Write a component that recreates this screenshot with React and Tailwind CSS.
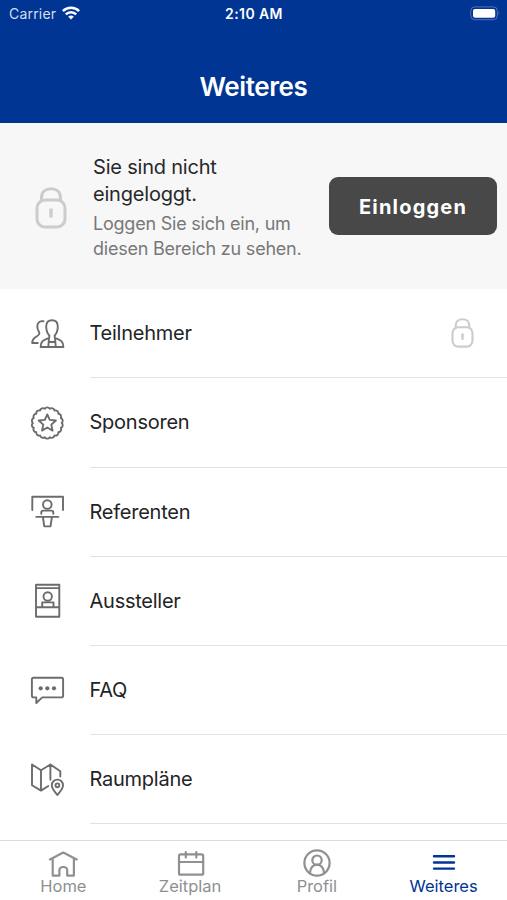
function LockIcon({ className }) {
  return (
    <svg
      viewBox="0 0 32 42"
      className={className}
      fill="none"
      stroke="#cccccc"
      strokeWidth="3"
      strokeLinecap="round"
    >
      <rect x="2" y="13" width="28" height="27" rx="8" />
      <path d="M6.5 13.5 V10.5 C6.5 5 10.5 1.7 16 1.7 C21.5 1.7 25.5 5 25.5 10.5 V13.5" />
      <path d="M16 21.5 V30.5" strokeLinecap="butt" strokeWidth="3.4" />
    </svg>
  );
}

function scallopPath(cx, cy, r, count) {
  let d = "";
  for (let i = 0; i <= count; i++) {
    const a = (i / count) * Math.PI * 2;
    const x = (cx + r * Math.cos(a)).toFixed(2);
    const y = (cy + r * Math.sin(a)).toFixed(2);
    d += i === 0 ? `M${x} ${y}` : ` A2.9 2.9 0 0 1 ${x} ${y}`;
  }
  return d + " Z";
}

function RowIcon({ children }) {
  return (
    <svg
      viewBox="0 0 40 40"
      className="ml-[27px] h-10 w-10 shrink-0"
      fill="none"
      stroke="#6b6c6e"
      strokeWidth="1.9"
      strokeLinecap="round"
      strokeLinejoin="round"
    >
      {children}
    </svg>
  );
}

const rows = [
  {
    label: "Teilnehmer",
    locked: true,
    icon: (
      <>
        <path d="M22.3 23.5 V21.5 C20 19 19.2 15.5 19.2 12.5 C19.2 8.5 21.5 6.2 25 6.2 C28.5 6.2 30.8 8.5 30.8 12.5 C30.8 15.5 30 19 27.7 21.5 V23.5 C31 26 36.4 25.5 36.4 33 H13.6 C13.6 25.5 19 26 22.3 23.5 Z" />
        <path d="M22 24.5 L21.3 33 M28 24.5 L28.8 33 M22 28 H28" />
        <path d="M16.5 7.3 C13.5 6.6 10.5 8.2 10.3 12 C10.2 14.5 11 16.5 12.2 18.5 C13.2 20.8 10.5 22 8 23.5 C5.8 25 5.2 26.5 5.2 29 H10.8" />
      </>
    ),
  },
  {
    label: "Sponsoren",
    icon: (
      <>
        <path d={scallopPath(20.3, 20, 14.4, 18)} />
        <path d="M20.3 11.4 L22.8 16.9 L28.9 17.5 L24.3 21.6 L25.6 27.6 L20.3 24.5 L15 27.6 L16.3 21.6 L11.7 17.5 L17.8 16.9 Z" />
      </>
    ),
  },
  {
    label: "Referenten",
    icon: (
      <>
        <path d="M5.3 18 V4.8 H36 V18" />
        <circle cx="20.3" cy="12.5" r="4.3" />
        <path d="M14.3 21.8 V20.5 Q14.3 18.6 16.3 18.6 H24.3 Q26.3 18.6 26.3 20.5 V21.8" />
        <path d="M9.3 24.9 H31.3 M15.9 25 L17.3 34.4 H23.5 L24.9 25" />
      </>
    ),
  },
  {
    label: "Aussteller",
    icon: (
      <>
        <path d="M9 3.8 H32.3 V35.7 H9 Z M9 7.1 H32.3 M9 26.2 H32.3" />
        <circle cx="20.7" cy="15.5" r="4.2" />
        <path d="M15.2 26 V21.4 H26.5 V26" />
      </>
    ),
  },
  {
    label: "FAQ",
    icon: (
      <>
        <path d="M6.5 6.7 H34.5 Q36.1 6.7 36.1 8.3 V24.8 Q36.1 26.4 34.5 26.4 H15.3 L9.3 32 V26.4 H6.5 Q4.9 26.4 4.9 24.8 V8.3 Q4.9 6.7 6.5 6.7 Z" />
        <g fill="#6b6c6e" stroke="none">
          <circle cx="13.7" cy="17.3" r="2.1" />
          <circle cx="20.3" cy="17.3" r="2.1" />
          <circle cx="27" cy="17.3" r="2.1" />
        </g>
      </>
    ),
  },
  {
    label: "Raumpläne",
    icon: (
      <>
        <path d="M21.3 26 L14 30.6 L5 25.3 V4.5 L14 10.3 L23.4 4.5 L33.3 11.3 V16.6 M14 10.3 V30.6 M23.4 4.5 V19.8" />
        <path d="M30.4 35 C27.5 31.2 24.8 28.8 24.8 25.2 C24.8 22 27.3 19.6 30.4 19.6 C33.5 19.6 36 22 36 25.2 C36 28.8 33.3 31.2 30.4 35 Z" />
        <circle cx="30.4" cy="25.3" r="1.9" />
      </>
    ),
  },
];

const tabs = [
  {
    label: "Home",
    icon: (
      <path d="M2.9 10.4 L16.3 3.6 L29.7 10.4 M5.7 9.2 V26.6 H12.4 V21.5 C12.4 16.8 20.2 16.8 20.2 21.5 V26.6 H26.9 V9.2" />
    ),
  },
  {
    label: "Zeitplan",
    icon: (
      <>
        <rect x="5" y="5.4" width="24.2" height="20.3" rx="1.5" />
        <path d="M5 13 H29.2 M11.8 3 V8.5 M22.3 3 V8.5" />
      </>
    ),
  },
  {
    label: "Profil",
    icon: (
      <>
        <circle cx="16" cy="14" r="12.6" />
        <circle cx="16" cy="11.2" r="4.7" />
        <path d="M9 24.3 C9 12.8 23 12.8 23 24.3" />
      </>
    ),
  },
  {
    label: "Weiteres",
    active: true,
    icon: <path d="M6 7.3 H26 M6 13.5 H26 M6 19.6 H26" />,
  },
];

function StatusBar() {
  return (
    <div className="grid h-[27px] grid-cols-3 items-center pr-[8px] pl-[9px] text-[14px] text-white">
      <div className="flex items-center gap-[6px]">
        <span className="tracking-[0.2px] text-[#d5deee]">Carrier</span>
        <svg viewBox="0 0 18 14" className="-mt-px h-[14px] w-[18px]" fill="none" stroke="#fff" strokeWidth="2.5">
          <path d="M0.9 5.1 C5.3 0.6 12.7 0.6 17.1 5.1" />
          <path d="M3.8 8.4 C6.7 5.5 11.3 5.5 14.2 8.4" />
          <path d="M9 13.6 L6.2 10.7 C7.8 9.2 10.2 9.2 11.8 10.7 Z" fill="#fff" stroke="none" />
        </svg>
      </div>
      <span className="text-center font-semibold tracking-[0.4px]">2:10 AM</span>
      <svg viewBox="0 0 31 15" className="-mr-[2px] h-[15px] w-[31px] justify-self-end">
        <rect x="0.8" y="0.9" width="26.5" height="12.8" rx="3.8" fill="none" stroke="#5470b0" />
        <rect x="3" y="2.9" width="22.2" height="8.8" rx="2" fill="#fff" />
        <path d="M28.7 5 Q30.5 7.3 28.7 9.5 Z" fill="#5470b0" />
      </svg>
    </div>
  );
}

export default function App() {
  return (
    <div className="flex h-[900px] w-[507px] flex-col overflow-hidden bg-white font-['Inter','Liberation_Sans',sans-serif]">
      <header className="h-[123px] shrink-0 bg-[#003594]">
        <StatusBar />
        <h1 className="mt-[42px] text-center text-[26px] leading-9 font-semibold tracking-[-0.4px] text-white">
          Weiteres
        </h1>
      </header>

      <section className="flex h-[166.2px] shrink-0 items-center bg-[#f7f7f7] pr-[10px] pl-[35px]">
        <LockIcon className="mt-[3px] h-[42px] w-8 shrink-0" />
        <div className="ml-[26px] w-[220px] shrink-0 pt-[2px]">
          <p className="pt-px text-[20px] leading-[27px] tracking-[-0.2px] text-[#27282a]">
            Sie sind nicht
            <br />
            eingeloggt.
          </p>
          <p className="mt-[4px] text-[18px] leading-[24.5px] tracking-[-0.22px] whitespace-nowrap text-[#77787a]">
            Loggen Sie sich ein, um
            <br />
            diesen Bereich zu sehen.
          </p>
        </div>
        <button className="ml-auto h-[58px] w-[168px] rounded-[9px] bg-[#484848] pt-[2px] text-[20px] font-bold tracking-[1.2px] text-white">
          Einloggen
        </button>
      </section>

      <ul className="min-h-0 flex-1 overflow-hidden">
        {rows.map((row) => (
          <li key={row.label} className="flex h-[89.2px] items-center">
            <RowIcon>{row.icon}</RowIcon>
            <div className="ml-[22.5px] flex h-full flex-1 items-center justify-between border-b border-[#e2e2e2] pr-[33px]">
              <span className="text-[20px] tracking-[-0.25px] text-[#232426]">{row.label}</span>
              {row.locked && <LockIcon className="h-[30px] w-[23px]" />}
            </div>
          </li>
        ))}
      </ul>

      <nav className="grid h-[60px] shrink-0 grid-cols-4 border-t border-[#dcdcdc] bg-white">
        {tabs.map((tab) => (
          <div
            key={tab.label}
            className={
              tab.active
                ? "flex flex-col items-center pt-[8px] text-[#003594]"
                : "flex flex-col items-center pt-[8px] text-[#8e9091]"
            }
          >
            <svg
              viewBox="0 0 32 28"
              className="h-7 w-8"
              fill="none"
              stroke="currentColor"
              strokeWidth={tab.active ? 2.4 : 2.2}
              strokeLinecap="round"
              strokeLinejoin="round"
            >
              {tab.icon}
            </svg>
            <span className="text-[16.5px] leading-[18px]">{tab.label}</span>
          </div>
        ))}
      </nav>
    </div>
  );
}
